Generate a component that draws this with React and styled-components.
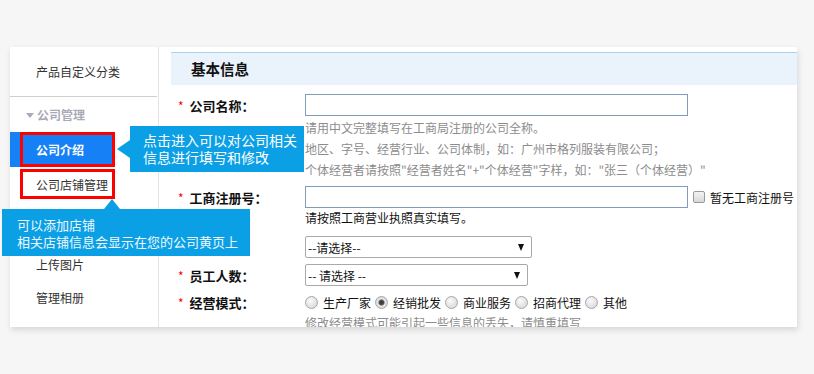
import React from "react";
import styled, { createGlobalStyle } from "styled-components";

const GlobalStyle = createGlobalStyle`
	body {
		margin: 0;
		background: #f6f6f6;
		font-family: "Noto Sans CJK SC", "Noto Sans", sans-serif;
	}
`;

export default function App() {
	return (
		<>
			<GlobalStyle />
			<Page>
				<Panel>
					<Sidebar>
						<TopItem>产品自定义分类</TopItem>
						<GroupTitle>
							<Caret />
							公司管理
						</GroupTitle>
						<NavItem $active $h={35}>
							<Frame $active>公司介绍</Frame>
							<TipRight>
								点击进入可以对公司相关
								<br />
								信息进行填写和修改
							</TipRight>
						</NavItem>
						<NavItem $h={30} $mt={2}>
							<Frame>公司店铺管理</Frame>
							<TipDown>
								可以添加店铺
								<br />
								相关店铺信息会显示在您的公司黄页上
							</TipDown>
						</NavItem>
						{/* item hidden under the tip */}
						<SideLink $h={49} />
						<SideLink>上传图片</SideLink>
						<SideLink>管理相册</SideLink>
					</Sidebar>
					<Main>
						<SectionHead>基本信息</SectionHead>
						<Form>
							<Row $mt={9}>
								<Label>
									<Star>*</Star>公司名称：
								</Label>
								<TextInput />
							</Row>
							<Hint>
								请用中文完整填写在工商局注册的公司全称。
								<br />
								地区、字号、经营行业、公司体制，如：广州市格列服装有限公司；
								<br />
								个体经营者请按照"经营者姓名"+"个体经营"字样，如："张三（个体经营）"
							</Hint>
							<Row $mt={6}>
								<Label>
									<Star>*</Star>工商注册号：
								</Label>
								<TextInput />
								<Check />
								<CheckText>暂无工商注册号</CheckText>
							</Row>
							<Note>请按照工商营业执照真实填写。</Note>
							<Row $mt={8}>
								<Label />
								<Select $w={227}>
									--请选择--
									<Arrow />
								</Select>
							</Row>
							<Row $mt={6}>
								<Label>
									<Star>*</Star>员工人数：
								</Label>
								<Select $w={223}>
									-- 请选择 --
									<Arrow />
								</Select>
							</Row>
							<Row $mt={6}>
								<Label>
									<Star>*</Star>经营模式：
								</Label>
								<Radios>
									{["生产厂家", "经销批发", "商业服务", "招商代理", "其他"].map((t, i) => (
										<RadioOpt key={t}>
											<Radio $checked={i === 1} />
											{t}
										</RadioOpt>
									))}
								</Radios>
							</Row>
							<Hint $lh={20}>修改经营模式可能引起一些信息的丢失，请慎重填写</Hint>
						</Form>
					</Main>
				</Panel>
			</Page>
		</>
	);
}

const Page = styled.div`
	padding: 47px 0 40px 10px;
`;

const Panel = styled.div`
	width: 787px;
	height: 280px;
	display: flex;
	background: #fff;
	box-shadow: 1px 3px 6px rgba(0, 0, 0, 0.13);
`;

const Sidebar = styled.div`
	width: 149px;
	flex-shrink: 0;
	box-sizing: border-box;
	border-right: 1px solid #e4e4e4;
	position: relative;
	z-index: 2;
`;

const TopItem = styled.div`
	height: 49px;
	display: flex;
	align-items: center;
	padding-left: 26px;
	font-size: 12px;
	color: #333;
	border-bottom: 1px solid #cfcfcf;
	margin-right: 1px;
`;

const GroupTitle = styled.div`
	height: 35px;
	display: flex;
	align-items: center;
	padding-left: 16px;
	font-size: 12px;
	font-weight: bold;
	color: #a9a9b8;
`;

const Caret = styled.span`
	width: 0;
	height: 0;
	border-left: 4px solid transparent;
	border-right: 4px solid transparent;
	border-top: 5px solid #a9a9b8;
	margin-right: 3px;
	margin-top: 2px;
`;

const NavItem = styled.div`
	position: relative;
	width: 105px;
	height: ${(p) => p.$h}px;
	margin-top: ${(p) => p.$mt || 0}px;
	box-sizing: border-box;
	padding-left: 10px;
	display: flex;
	background: ${(p) => (p.$active ? "#1681f6" : "transparent")};
`;

const Frame = styled.div`
	flex: 1;
	border: 3px solid #ff0000;
	display: flex;
	align-items: center;
	padding-left: 13px;
	font-size: 12px;
	font-weight: ${(p) => (p.$active ? "bold" : "normal")};
	color: ${(p) => (p.$active ? "#fff" : "#333")};
`;

const Tip = styled.div`
	position: absolute;
	background: #0ba0e6;
	color: #fff;
	line-height: 17px;
	white-space: nowrap;
	box-sizing: border-box;
	&::before {
		content: "";
		position: absolute;
		width: 0;
		height: 0;
	}
`;

const TipRight = styled(Tip)`
	left: 120px;
	top: -6px;
	width: 174px;
	height: 46px;
	padding: 6px 0 0 13px;
	font-size: 14px;
	&::before {
		left: -13px;
		top: 14px;
		border-top: 9px solid transparent;
		border-bottom: 9px solid transparent;
		border-right: 13px solid #0ba0e6;
	}
`;

const TipDown = styled(Tip)`
	left: -8px;
	top: 40px;
	width: 248px;
	height: 47px;
	padding: 7px 0 0 15px;
	font-size: 13px;
	color: #eef8fd;
	&::before {
		left: 102px;
		top: -10px;
		border-left: 8px solid transparent;
		border-right: 8px solid transparent;
		border-bottom: 10px solid #0ba0e6;
	}
`;

const SideLink = styled.div`
	height: ${(p) => p.$h || 33}px;
	display: flex;
	align-items: center;
	padding-left: 26px;
	font-size: 12px;
	color: #333;
`;

const Main = styled.div`
	flex: 1;
	overflow: hidden;
	padding: 5px 0 0 12px;
`;

const SectionHead = styled.div`
	height: 32px;
	line-height: 32px;
	border-top: 1px solid #a9d5ec;
	background: #eaf2fc;
	padding-left: 20px;
	font-size: 14.5px;
	font-weight: bold;
	color: #111;
`;

const Form = styled.div`
	padding-left: 7px;
`;

const Row = styled.div`
	display: flex;
	align-items: center;
	margin-top: ${(p) => p.$mt || 0}px;
	min-height: 20px;
`;

const Label = styled.div`
	width: 127px;
	flex-shrink: 0;
	font-size: 13px;
	font-weight: bold;
	color: #111;
	white-space: nowrap;
`;

const Star = styled.span`
	color: #f00;
	font-size: 12px;
	font-weight: normal;
	margin-right: 6px;
`;

const TextInput = styled.div`
	width: 383px;
	height: 22px;
	box-sizing: border-box;
	border: 1px solid #7f9db9;
	background: #fff;
`;

const Check = styled.span`
	width: 12px;
	height: 12px;
	box-sizing: border-box;
	margin-left: 5px;
	border: 1px solid #9a9a9a;
	border-radius: 2px;
	background: linear-gradient(#f4f4f4, #d8d8d8);
`;

const CheckText = styled.span`
	margin-left: 5px;
	font-size: 12px;
	color: #111;
	white-space: nowrap;
`;

const Hint = styled.div`
	margin-left: 127px;
	margin-top: 1px;
	font-size: 12px;
	line-height: ${(p) => p.$lh || 21}px;
	color: #8c8c8c;
	white-space: nowrap;
`;

const Note = styled.div`
	margin-left: 127px;
	font-size: 12px;
	line-height: 20px;
	color: #111;
`;

const Select = styled.div`
	width: ${(p) => p.$w}px;
	height: 22px;
	box-sizing: border-box;
	border: 1px solid #a9a9a9;
	border-radius: 2px;
	display: flex;
	align-items: center;
	justify-content: space-between;
	padding: 0 7px 0 2px;
	font-size: 12px;
	color: #111;
`;

const Arrow = styled.span`
	width: 0;
	height: 0;
	border-left: 3.5px solid transparent;
	border-right: 3.5px solid transparent;
	border-top: 7px solid #111;
`;

const Radios = styled.div`
	display: flex;
	align-items: center;
	gap: 4px;
`;

const RadioOpt = styled.span`
	display: flex;
	align-items: center;
	gap: 5px;
	font-size: 12px;
	color: #111;
	white-space: nowrap;
`;

const Radio = styled.span`
	width: 13px;
	height: 13px;
	box-sizing: border-box;
	border-radius: 50%;
	border: 1px solid #a6a6a6;
	background: ${(p) =>
		p.$checked
			? "radial-gradient(circle, #333 0, #555 2.5px, #e6e6e6 3.5px, #cfcfcf 100%)"
			: "radial-gradient(circle at 40% 35%, #fafafa, #d2d2d2)"};
`;
